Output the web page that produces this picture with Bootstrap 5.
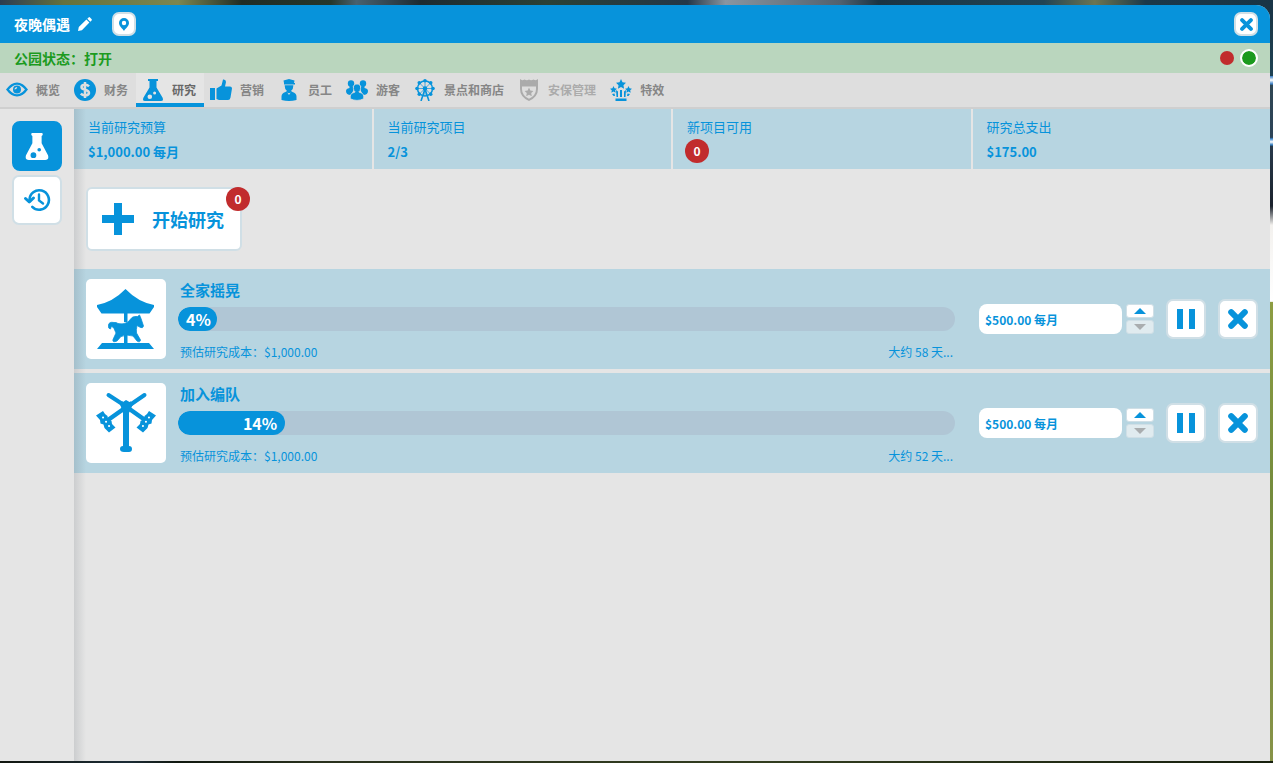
<!DOCTYPE html>
<html lang="zh-CN">
<head>
<meta charset="utf-8">
<meta name="viewport" content="width=device-width, initial-scale=1">
<title>夜晚偶遇</title>
<link href="https://cdn.jsdelivr.net/npm/bootstrap@5.3.0/dist/css/bootstrap.min.css" rel="stylesheet">
<style>
:root { --blue: #0793db; --pale: #b7d5e1; --panel: #e5e5e5; --edge: #d0dfe6; --red: #c12c2d; }
body {
  font-family: "Noto Sans CJK SC", sans-serif; font-size: 12px; line-height: 16px; color: var(--blue);
  padding: 5px 3px 2px 0;
  background:
    linear-gradient(90deg, #2b3c52 0, #65713c 5%, #7c8650 14%, #202c25 19%, #26372b 26%, #49616f 28%, #1d2b31 33%, #2b4135 43%, #243747 54%, #8995a0 57%, #51616e 66%, #1a3443 69%, #214456 82%, #6c7450 86%, #1b3849 90%, #193547 100%) top / 100% 20px no-repeat,
    linear-gradient(90deg, #11160f, #1c2c36 10%, #10180f 14%, #29311d 25%, #323d1f 60%, #17200e) bottom / 100% 2px no-repeat,
    linear-gradient(#1a3443 0, #1e4254 10%, #4183c8 10%, #fff 10.5%, #3b7fc5 11%, #2f4653 11.2%, #2c4358 18%, #3d89d1 18.2%, #fff 18.6%, #2b78bd 19%, #28394b 19.2%, #1a222c 27%, #f3f1ee 29.5%, #fff 39.5%, #8d9d43 39.6%, #748b3c 65%, #879348 100%) right / 3px 100% no-repeat,
    #26362c;
}
svg { display: block; fill: currentColor; flex: none; }
a { color: inherit; text-decoration: none; }
.window-frame { min-height: calc(100vh - 7px); background: var(--panel); border-top-right-radius: 14px; overflow: hidden; }
.title-bar { height: 38px; background: var(--blue); color: #fff; padding: 0 12px 0 14px; }
.title-bar h1 { font-size: 14px; line-height: 20px; font-weight: 700; margin: 0; }
.tool-btn { display: flex; align-items: center; justify-content: center; padding: 0; background: #fff; color: var(--blue); border: 2px solid var(--edge); border-radius: 7px; }
.tool-sm { width: 24px; height: 24px; }
.tool-md { width: 40px; height: 40px; }
.pin-btn { margin-left: 20px; }
.park-state { height: 30px; background: #bad6be; color: #1c9b1f; padding: 0 12px 0 14px; font-size: 14px; font-weight: 700; }
.state-dot { appearance: none; width: 18px; height: 18px; margin: 0; border-radius: 50%; border: 2px solid transparent; background-clip: padding-box; }
.state-dot.closed { background-color: var(--red); }
.state-dot.opened { background-color: #1b9a1e; }
.state-dot:checked { border-color: #fff; }
.main-tabs { background: #dedede; border-bottom: 2px solid #cfcfcf; }
.main-tabs a { display: flex; align-items: center; gap: 8px; height: 34px; padding: 0 8px 0 6px; color: #868686; font-weight: 700; white-space: nowrap; }
.main-tabs svg { color: var(--blue); }
.main-tabs a.active { background: var(--panel); color: #686868; box-shadow: inset 0 -4px var(--blue); }
.main-tabs a.off, .main-tabs a.off svg { color: #ababab; }
.side-menu { width: 74px; flex: none; padding: 12px; gap: 4px; }
.side-menu .tool-btn { width: 50px; height: 50px; }
.side-menu .active { background: var(--blue); border-color: var(--blue); color: #fff; border-radius: 8px; }
.content-area { min-width: 0; position: relative; }
.content-area::before { content: ""; position: absolute; inset: 0 auto 0 0; width: 12px; background: linear-gradient(90deg, rgba(60,70,80,.15), transparent); pointer-events: none; }
.stat-strip { display: grid; grid-template-columns: repeat(4, 1fr); gap: 2px; }
.stat-cell { background: var(--pale); height: 60px; padding: 8px 14px; }
.stat-cell dt { font-size: 13px; line-height: 20px; font-weight: 400; }
.stat-cell dd { font-size: 13px; line-height: 20px; font-weight: 700; margin: 5px 0 0; }
.count-dot { display: flex; align-items: center; justify-content: center; width: 24px; height: 24px; border-radius: 50%; background: var(--red); color: #fff; font-size: 12px; font-weight: 700; }
.stat-cell .count-dot { font-size: 12px; margin: 2px 0 0 -2px; }
.start-zone { padding: 18px 12px; }
.start-btn { position: relative; display: flex; align-items: center; gap: 18px; height: 64px; padding: 0 16px 0 14px; background: #fff; color: var(--blue); border: 2px solid var(--edge); border-radius: 6px; font-size: 18px; font-weight: 700; line-height: 28px; }
.start-btn .count-dot { position: absolute; top: -2px; right: -10px; }
.project-row { background: var(--pale); height: 100px; padding: 10px 12px; }
.ride-tile { width: 80px; height: 80px; border-radius: 5px; background: #fff; flex: none; }
.project-info { min-width: 0; margin: 0 24px 0 12px; }
.project-info h2 { font-size: 15px; line-height: 22px; font-weight: 700; margin: 0 2px 6px; }
.project-info .progress { height: 24px; border-radius: 12px; background: #b0c6d5; }
.project-info .progress-bar { min-width: 39px; border-radius: 12px; background: var(--blue); font-size: 16px; font-weight: 700; text-align: right; padding: 0 8px; }
.project-note { margin: 13px 2px 0; }
.budget-box { width: 143px; height: 30px; border: 0; border-radius: 8px; background: #fff; color: var(--blue); padding: 1px 6px 0; font-size: 12px; font-weight: 700; }
.spin-pair { display: flex; flex-direction: column; gap: 2px; margin: 0 12px 0 4px; }
.spin-btn { display: flex; align-items: center; justify-content: center; width: 28px; height: 14px; padding: 0; border: 1px solid var(--edge); border-radius: 3px; background: #fff; color: var(--blue); }
.spin-btn:disabled { background: #e0ebef; color: #a9adaf; }
.row-actions { gap: 12px; }
</style>
</head>
<body>
<svg class="d-none" aria-hidden="true">
  <symbol id="flask" viewBox="0 0 24 28">
    <path fill-rule="evenodd" d="M6 1.2Q6 0 7.2 0H16.8Q18 0 18 1.2T16.8 3V10.5L23.4 23.2Q24.8 28 20.4 28H3.6Q-.8 28 .6 23.2L7.2 10.5V3Q6 2.400 6 1.200ZM8.300 20A3 3 0 1 0 8.300 26A3 3 0 1 0 8.300 20ZM14.300 15.500A1.900 1.900 0 1 0 14.300 19.300A1.900 1.900 0 1 0 14.300 15.500Z"/>
  </symbol>
  <symbol id="cross" viewBox="0 0 20 20"><path d="M3.200 3.200 16.800 16.800M16.800 3.200 3.200 16.800" stroke="currentColor" stroke-width="6" stroke-linecap="round"/></symbol>
  <symbol id="pause" viewBox="0 0 18 20"><path d="M0 0H6V20H0ZM12 0H18V20H12Z"/></symbol>
  <symbol id="star" viewBox="0 0 20 20"><path d="M10 0 13 6.600 20 7.500 14.900 12.400 16.200 19.500 10 16 3.800 19.500 5.100 12.400 0 7.500 7 6.600Z"/></symbol>
  <symbol id="spin-up" viewBox="0 0 12 6"><path d="M6 0 12 6H0Z"/></symbol>
  <symbol id="spin-down" viewBox="0 0 12 6"><path d="M0 0H12L6 6Z"/></symbol>
</svg>

<div class="window-frame d-flex flex-column">
  <header class="title-bar d-flex align-items-center">
    <h1>夜晚偶遇</h1>
    <a href="#" class="ms-2" aria-label="重命名"><svg width="14" height="14" viewBox="0 0 14 14"><path d="M0 14 .8 10 8.400 2.600 11.400 5.600 3.900 13.200ZM9.300 1.700 10.600.4Q11.300-.2 12 .5L13.500 2Q14.200 2.700 13.600 3.400L12.300 4.700Z"/></svg></a>
    <button class="tool-btn tool-sm pin-btn" type="button" aria-label="定位"><svg width="10" height="13" viewBox="0 0 10 13"><path fill-rule="evenodd" d="M5 0A5 5 0 0 1 10 5C10 8 6.500 10.500 5 13C3.500 10.500 0 8 0 5A5 5 0 0 1 5 0ZM5 2.800A2.200 2.200 0 1 0 5 7.200A2.200 2.200 0 1 0 5 2.800Z"/></svg></button>
    <button class="tool-btn tool-sm ms-auto" type="button" aria-label="关闭"><svg width="13" height="13"><use href="#cross"/></svg></button>
  </header>

  <section class="park-state d-flex align-items-center justify-content-between">
    <span>公园状态：打开</span>
    <div class="d-flex gap-1">
      <input class="state-dot closed" type="radio" name="park" aria-label="关闭公园">
      <input class="state-dot opened" type="radio" name="park" aria-label="打开公园" checked>
    </div>
  </section>

  <nav class="main-tabs d-flex">
    <a href="#"><svg width="22" height="22" viewBox="0 0 22 22"><path fill-rule="evenodd" d="M0 10.500Q5 3.500 11 3.500T22 10.500Q17 17.500 11 17.500T0 10.500ZM3 10.500Q7 15.200 11 15.200T19 10.500Q15 5.800 11 5.800T3 10.500Z"/><path fill-rule="evenodd" d="M11 6.500A4 4 0 1 0 11 14.500A4 4 0 1 0 11 6.500ZM11.300 8Q8.500 8 8.500 10.500Q10.800 10.500 11.300 8Z"/></svg>概览</a>
    <a href="#"><svg width="22" height="22" viewBox="0 0 22 22"><circle cx="11" cy="11" r="11"/><path d="M15 7.300Q13.500 5.600 11 5.700Q7.500 5.800 7.500 8Q7.500 10 11 10.700Q15 11.500 15 14Q14.700 16.300 11 16.400Q8.300 16.300 6.800 14.600M11 3V19" fill="none" stroke="#dedede" stroke-width="2.500"/></svg>财务</a>
    <a href="#" class="active" aria-current="page"><svg width="22" height="22" viewBox="0 0 22 22"><path fill-rule="evenodd" d="M6 0H16V2H14.500V8.500L20.500 18.500Q22 22 19 22H3Q0 22 1.500 18.500L7.500 8.500V2H6ZM7.800 15.500A2.300 2.300 0 1 0 7.800 20.100A2.300 2.300 0 1 0 7.800 15.500ZM12.600 12.500A1.500 1.500 0 1 0 12.600 15.500A1.500 1.500 0 1 0 12.600 12.500Z"/></svg>研究</a>
    <a href="#"><svg width="22" height="22" viewBox="0 0 22 22"><path d="M0 9H5V21H0ZM6.500 9.500 11.500 6.500 13 .5Q16 0 16 3L15 7.500H20Q22 7.500 22 9.500L20.500 18.500Q20 21 18 21H9L6.500 20Z"/></svg>营销</a>
    <a href="#"><svg width="22" height="22" viewBox="0 0 22 22"><path d="M5.500 1.500 11 0 16.500 1.500 16 4H17V5.500H6V4ZM6.700 6.200H15.300Q15.500 10.500 13 12L14.500 13Q18.500 14 18.500 17.500V21Q11 23 3.500 21V17.500Q3.500 14 7.500 13L9 12Q6.500 10.500 6.700 6.200Z"/><path d="M9.300 13.500Q11 15 12.700 13.500L11 16Z" fill="#dedede"/></svg>员工</a>
    <a href="#"><svg width="22" height="22" viewBox="0 0 22 22"><circle cx="5" cy="4.500" r="3.200"/><circle cx="17" cy="4.500" r="3.200"/><path d="M3.500 7H6.500L8 10 5 16Q0 16 0 12Q0 9.500 3.500 9ZM18.500 7H15.500L14 10 17 16Q22 16 22 12Q22 9.500 18.500 9Z"/><path d="M11 5Q15 5 14.600 9.500Q14.300 12 12.800 13L16 14.300Q18 15 17.700 19.800Q11 23 4.300 19.800Q4 15 6 14.300L9.200 13Q7.700 12 7.400 9.500Q7 5 11 5Z" stroke="#dedede" stroke-width=".8"/></svg>游客</a>
    <a href="#"><svg width="22" height="22" viewBox="0 0 22 22"><g fill="none" stroke="currentColor"><circle cx="11" cy="9.500" r="7.500" stroke-width="1.500"/><path d="M11 2V17M3.500 9.500H18.500M5.700 4.200 16.300 14.800M16.300 4.200 5.700 14.800" stroke-width=".7"/><path d="M11 10 7 22M11 10 15 22" stroke-width="1.600"/></g><circle cx="11" cy="9.500" r="2.300"/><g><circle cx="11" cy="1.800" r="1.800"/><circle cx="16.700" cy="3.800" r="1.800"/><circle cx="19" cy="9.500" r="1.800"/><circle cx="16.700" cy="15.200" r="1.800"/><circle cx="5.300" cy="15.200" r="1.800"/><circle cx="3" cy="9.500" r="1.800"/><circle cx="5.300" cy="3.800" r="1.800"/></g></svg>景点和商店</a>
    <a href="#" class="off" aria-disabled="true"><svg width="22" height="22" viewBox="0 0 22 22"><path fill-rule="evenodd" d="M2 0Q4 2 6.500.5Q9 2 11 .5Q13 2 15.500.5Q18 2 20 0V10Q20 18 11 22Q2 18 2 10ZM4 7.500V10Q4 16.500 11 19.700Q18 16.500 18 10V7.500Z"/><use href="#star" x="6.500" y="8.500" width="9" height="9"/></svg>安保管理</a>
    <a href="#"><svg width="22" height="22" viewBox="0 0 22 22"><use href="#star" x="6" y="0" width="10" height="10"/><use href="#star" x="0" y="7" width="7" height="7"/><use href="#star" x="15" y="7" width="7" height="7"/><path d="M10 11H12V18H10ZM6 11 8 12.500V18H6.500ZM16 11 14 12.500V18H15.500ZM2 15 4.500 14.500 5 17H3.500ZM20 15 17.500 14.500 17 17H18.500ZM5.500 19.500H16.500V22H5.500Z"/></svg>特效</a>
  </nav>

  <div class="d-flex flex-grow-1">
    <aside class="side-menu d-flex flex-column">
      <button class="tool-btn active" type="button" aria-label="研究"><svg width="24" height="27"><use href="#flask"/></svg></button>
      <button class="tool-btn" type="button" aria-label="历史"><svg width="28" height="24" viewBox="0 0 28 24"><path d="M6.500 12A9.700 9.700 0 1 1 9.300 18.800" fill="none" stroke="currentColor" stroke-width="2.600" stroke-linecap="round"/><path d="M2.500 10.500 6.300 14 10.500 10" fill="none" stroke="currentColor" stroke-width="3" stroke-linecap="round" stroke-linejoin="round"/><path d="M16 6.500V12.500L20 15.500" fill="none" stroke="currentColor" stroke-width="2.400" stroke-linecap="round"/></svg></button>
    </aside>

    <main class="content-area flex-grow-1">
      <dl class="stat-strip m-0">
        <div class="stat-cell"><dt>当前研究预算</dt><dd>$1,000.00 每月</dd></div>
        <div class="stat-cell"><dt>当前研究项目</dt><dd>2/3</dd></div>
        <div class="stat-cell"><dt>新项目可用</dt><dd class="count-dot">0</dd></div>
        <div class="stat-cell"><dt>研究总支出</dt><dd>$175.00</dd></div>
      </dl>

      <div class="start-zone d-flex">
        <button class="start-btn" type="button">
          <svg width="32" height="32" viewBox="0 0 32 32"><path d="M12 0H20V12H32V20H20V32H12V20H0V12H12Z" /></svg>
          开始研究
          <span class="count-dot">0</span>
        </button>
      </div>

      <section class="d-flex flex-column gap-1">
        <article class="project-row d-flex">
          <div class="ride-tile"><svg width="80" height="80" viewBox="0 0 80 80"><path d="M39.500 10Q52 23 68 26V28L63.500 34.500H15.500L11 28V26Q27 23 39.500 10ZM38 34H41.500V43H38ZM38 56H41.500V64H38ZM16 64H63L68 70H11Z"/><path d="M24.500 50Q22 50 22.500 46Q23 42.500 28 43.500Q30 43 32 44.500Q37 46 42 43L46 38.500Q48 37 51.500 37.500L53.500 36 55 39.500 57.500 47Q57 49.500 54.500 48.500L51 46.500Q50 51 50.500 54L54.500 61Q54 64 51 62L47 57Q41 55 35 57.500L31 62Q26 64 27 60.500L30 54 28 49.500 25.500 47Z" stroke="currentColor" stroke-width=".8"/></svg></div>
          <div class="project-info flex-grow-1">
            <h2>全家摇晃</h2>
            <div class="progress" role="progressbar" aria-label="全家摇晃" aria-valuenow="4" aria-valuemin="0" aria-valuemax="100"><div class="progress-bar" style="width:4%">4%</div></div>
            <div class="project-note d-flex justify-content-between"><span>预估研究成本：$1,000.00</span><span>大约 58 天...</span></div>
          </div>
          <div class="d-flex align-items-center">
            <input class="budget-box" type="text" value="$500.00 每月" aria-label="全家摇晃 预算">
            <div class="spin-pair">
              <button class="spin-btn" type="button" aria-label="增加"><svg width="12" height="6"><use href="#spin-up"/></svg></button>
              <button class="spin-btn" type="button" aria-label="减少" disabled><svg width="12" height="6"><use href="#spin-down"/></svg></button>
            </div>
            <div class="d-flex row-actions">
              <button class="tool-btn tool-md" type="button" aria-label="暂停"><svg width="18" height="20"><use href="#pause"/></svg></button>
              <button class="tool-btn tool-md" type="button" aria-label="取消"><svg width="20" height="20"><use href="#cross"/></svg></button>
            </div>
          </div>
        </article>

        <article class="project-row d-flex">
          <div class="ride-tile"><svg width="80" height="80" viewBox="0 0 80 80"><path d="M22.500 12 41 24 58.500 12" fill="none" stroke="currentColor" stroke-width="4" stroke-linecap="round"/><path d="M22 37 46 20M59 37 35 20" fill="none" stroke="currentColor" stroke-width="4.500"/><path d="M37 23H43V63Q46 63 46 66T43 69H38Q34 69 34 66T37 63ZM34 21 40 17 47 21 43 30H37Z"/><g id="gondola"><path d="M10 32.500 17 28 19 31 21.500 33 22 36 25.500 38 26 41 29.500 44.500 23 49.500 20 46.500 18.500 45 17.500 41.500 14.500 40.500 14 37Z"/><path d="M17 34.500h.1M20 38.800h.1M23 43h.1" stroke="#fff" stroke-width="2" stroke-linecap="round"/></g><use href="#gondola" transform="matrix(-1 0 0 1 80 0)"/></svg></div>
          <div class="project-info flex-grow-1">
            <h2>加入编队</h2>
            <div class="progress" role="progressbar" aria-label="加入编队" aria-valuenow="14" aria-valuemin="0" aria-valuemax="100"><div class="progress-bar" style="width:13.8%">14%</div></div>
            <div class="project-note d-flex justify-content-between"><span>预估研究成本：$1,000.00</span><span>大约 52 天...</span></div>
          </div>
          <div class="d-flex align-items-center">
            <input class="budget-box" type="text" value="$500.00 每月" aria-label="加入编队 预算">
            <div class="spin-pair">
              <button class="spin-btn" type="button" aria-label="增加"><svg width="12" height="6"><use href="#spin-up"/></svg></button>
              <button class="spin-btn" type="button" aria-label="减少" disabled><svg width="12" height="6"><use href="#spin-down"/></svg></button>
            </div>
            <div class="d-flex row-actions">
              <button class="tool-btn tool-md" type="button" aria-label="暂停"><svg width="18" height="20"><use href="#pause"/></svg></button>
              <button class="tool-btn tool-md" type="button" aria-label="取消"><svg width="20" height="20"><use href="#cross"/></svg></button>
            </div>
          </div>
        </article>
      </section>
    </main>
  </div>
</div>
<script src="https://cdn.jsdelivr.net/npm/bootstrap@5.3.0/dist/js/bootstrap.bundle.min.js"></script>
</body>
</html>
